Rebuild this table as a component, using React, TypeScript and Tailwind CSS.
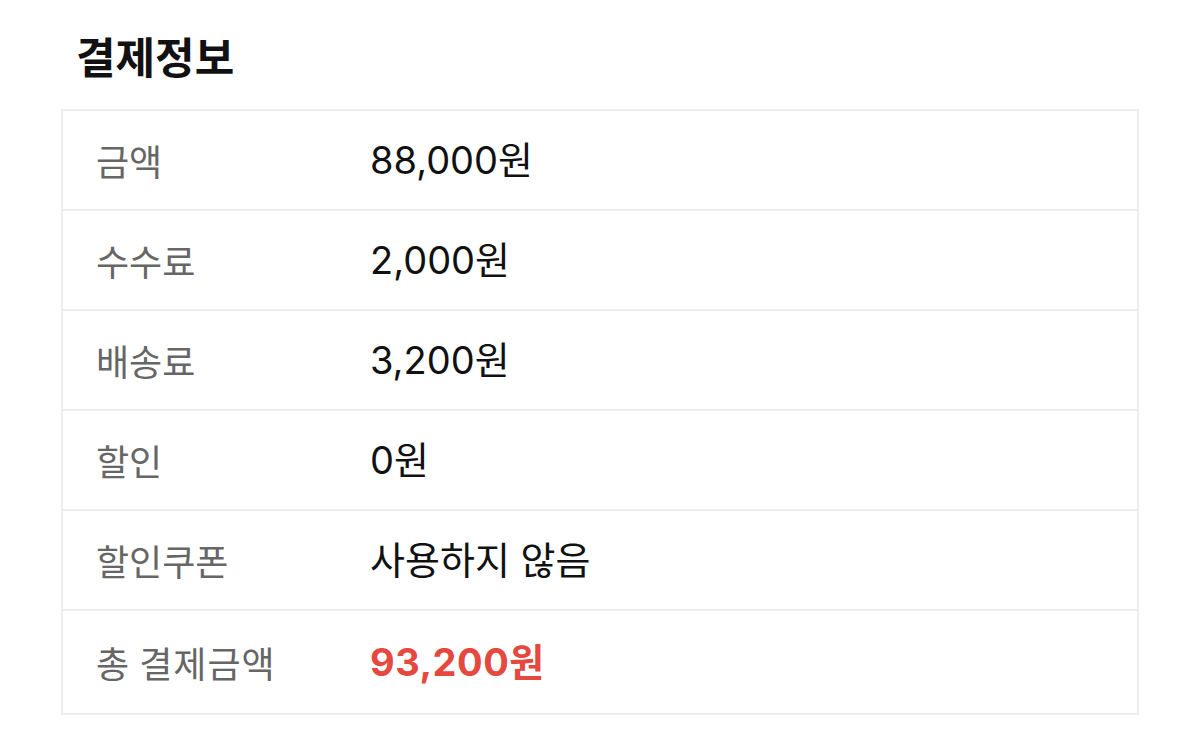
import React from 'react';

const rows = [
    { label: '금액', value: '88,000원' },
    { label: '수수료', value: '2,000원' },
    { label: '배송료', value: '3,200원' },
    { label: '할인', value: '0원' },
    { label: '할인쿠폰', value: '사용하지 않음' },
];

const App = () => {
    return (
        <main className="min-h-screen w-[1200px] h-[756px] bg-white px-[61px] font-['Inter','Noto_Sans_CJK_KR',sans-serif]">
            {/* Section title */}
            <h2 className="pl-[15px] pt-[30px] h-[109px] text-[43px] leading-[56px] font-bold text-[#111]">
                결제정보
            </h2>

            {/* Payment table */}
            <div className="w-[1078px] border-2 border-[#ededed]">
                {rows.map((row) => (
                    <div key={row.label} className="h-[100px] flex items-center border-b-2 border-[#ededed]">
                        <span className="w-[307px] pl-[33px] text-[36px] text-[#666] font-['Noto_Sans_CJK_KR',sans-serif]">
                            {row.label}
                        </span>
                        <span className="text-[38px] text-[#111]">{row.value}</span>
                    </div>
                ))}
                <div className="h-[102px] flex items-center">
                    <span className="w-[307px] pl-[33px] text-[36px] text-[#666] font-['Noto_Sans_CJK_KR',sans-serif] tracking-[1px]">
                        총 결제금액
                    </span>
                    <span className="text-[38px] font-bold text-[#e5483f] tracking-[0.5px]">93,200원</span>
                </div>
            </div>
        </main>
    );
};

export default App;
